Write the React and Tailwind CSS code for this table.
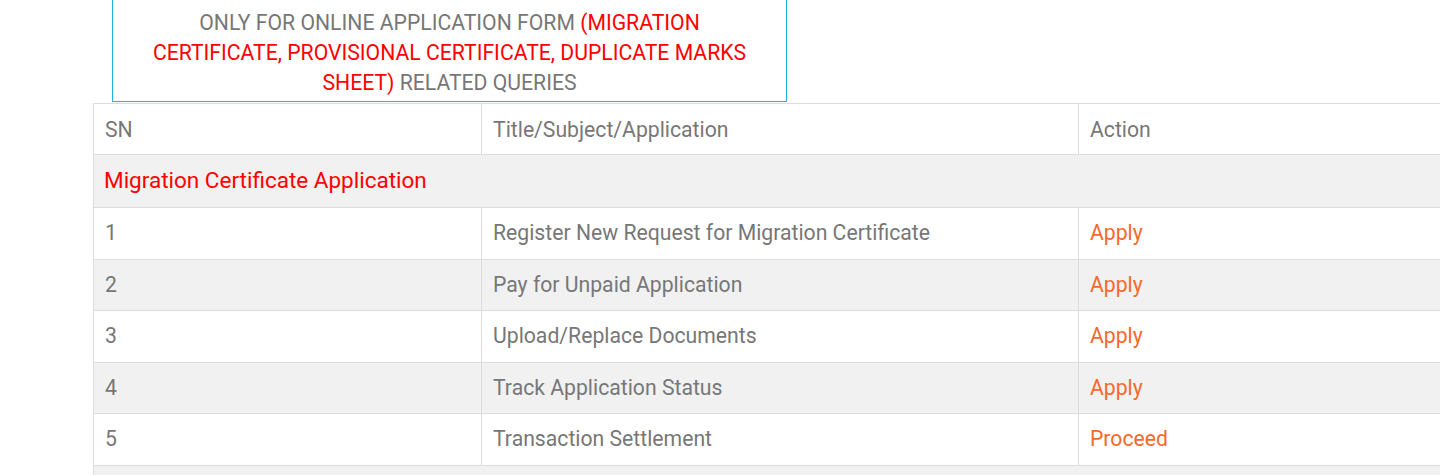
import React from "react";

const rows = [
  { sn: 1, title: "Register New Request for Migration Certificate", action: "Apply" },
  { sn: 2, title: "Pay for Unpaid Application", action: "Apply" },
  { sn: 3, title: "Upload/Replace Documents", action: "Apply" },
  { sn: 4, title: "Track Application Status", action: "Apply" },
  { sn: 5, title: "Transaction Settlement", action: "Proceed" },
];

export default function App() {
  return (
    <div className="h-[475px] overflow-hidden bg-white pl-[93px] font-['Roboto',sans-serif] text-[#777]">
      <div className="ml-[19px] w-[675px] border-x border-b border-[#1eb3df] px-[30px] pt-[8px] pb-[3px] text-center text-[21.2px] leading-[30px] uppercase">
        Only for online application form{" "}
        <span className="text-[#ff0000]">
          (Migration Certificate, Provisional Certificate, Duplicate Marks Sheet)
        </span>{" "}
        Related Queries
      </div>
      <table className="mt-[1px] w-[1500px] table-fixed border-collapse text-[21.2px]">
        <colgroup>
          <col className="w-[388px]" />
          <col className="w-[597px]" />
          <col />
        </colgroup>
        <tbody>
          <tr className="bg-white">
            <td className="h-[51px] border border-[#ddd] px-[11px] pt-[2px]">SN</td>
            <td className="h-[51px] border border-[#ddd] px-[11px] pt-[2px]">Title/Subject/Application</td>
            <td className="h-[51px] border border-[#ddd] px-[11px] pt-[2px]">Action</td>
          </tr>
          <tr className="bg-[#f1f1f1]">
            <td colSpan={3} className="h-[53px] border border-[#ddd] pl-[10px] pr-[11px] text-[22.5px] text-[#ff0000]">
              Migration Certificate Application
            </td>
          </tr>
          {rows.map((r) => (
            <tr key={r.sn} className={r.sn % 2 === 0 ? "bg-[#f1f1f1]" : "bg-white"}>
              <td className="h-[51.5px] border border-[#ddd] px-[11px]">{r.sn}</td>
              <td className="h-[51.5px] border border-[#ddd] px-[11px]">{r.title}</td>
              <td className="h-[51.5px] border border-[#ddd] px-[11px] text-[#f7692a]">
                <a href="#">{r.action}</a>
              </td>
            </tr>
          ))}
          <tr className="bg-[#f1f1f1]">
            <td colSpan={3} className="h-[52px] border border-[#ddd] px-[11px]">&nbsp;</td>
          </tr>
        </tbody>
      </table>
    </div>
  );
}
